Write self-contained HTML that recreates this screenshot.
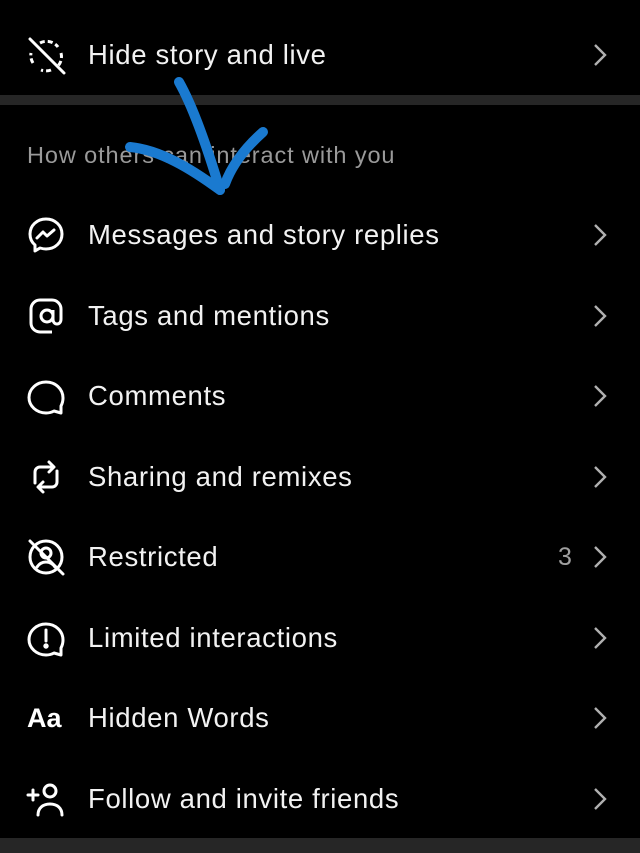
<!DOCTYPE html>
<html><head><meta charset="utf-8"><style>
html,body{margin:0;padding:0;background:#000;width:640px;height:853px;overflow:hidden;position:relative;font-family:"Liberation Sans",Roboto,sans-serif}
.row{position:absolute;left:0;width:640px;height:40px}
.t{position:absolute;left:88px;top:0;line-height:40px;font-size:27.5px;letter-spacing:0.65px;color:#f2f2f2;white-space:nowrap}
.ic{position:absolute;left:26px;top:0;width:40px;height:40px}
.div{position:absolute;left:0;width:640px;background:#262626}
</style></head><body>
<div class="div" style="top:95px;height:10px"></div>
<div class="div" style="top:838px;height:15px"></div>
<div style="position:absolute;left:27px;top:141px;font-size:23.5px;letter-spacing:0.9px;line-height:28px;color:#9a9a9a;white-space:nowrap">How others can interact with you</div>

<div class="row" style="top:35px">
<svg class="ic" viewBox="0 0 40 40" fill="none" stroke="#fff" stroke-width="3"><path d="M14 8a14 14 0 0 1 18 4M35 18a14 14 0 0 1-4 14M25 35a14 14 0 0 1-10 0M7 28a14 14 0 0 1-2-10" stroke-dasharray="5 3"/><path d="M4 4l34 34" stroke-linecap="round"/></svg>
<div class="t">Hide story and live</div></div>

<div class="row" style="top:215px">
<svg class="ic" viewBox="0 0 40 40" fill="none" stroke="#fff" stroke-width="3" stroke-linejoin="round"><path d="M20 4C11 4 4 10.5 4 19c0 4.5 2 8.5 5 11v6l5-3c2 .6 4 1 6 1 9 0 16-6.5 16-15S29 4 20 4z"/><path d="M11 23l6-6 4 4 7-6" stroke-linecap="round"/></svg>
<div class="t">Messages and story replies</div></div>

<div class="row" style="top:296px">
<svg class="ic" viewBox="0 0 40 40" fill="none" stroke="#fff" stroke-width="3"><path d="M26 36H14a9 9 0 0 1-9-9V13a9 9 0 0 1 9-9h12a9 9 0 0 1 9 9v10c0 3-1.5 5-4 5s-4-2-4-5v-9"/><circle cx="21" cy="20" r="6"/></svg>
<div class="t">Tags and mentions</div></div>

<div class="row" style="top:376px">
<svg class="ic" viewBox="0 0 40 40" fill="none" stroke="#fff" stroke-width="3" stroke-linejoin="round"><path d="M35 30c1.3-2.5 2-5 2-8 0-9-7.6-16-17-16S3 13 3 21.5 10.6 37 20 37c3 0 5.7-.7 8-2l7 2z"/></svg>
<div class="t">Comments</div></div>

<div class="row" style="top:457px">
<svg class="ic" viewBox="0 0 40 40" fill="none" stroke="#fff" stroke-width="3" stroke-linecap="round" stroke-linejoin="round"><path d="M9 26V15a5 5 0 0 1 5-5h13M23 5l5 5-5 5M31 14v11a5 5 0 0 1-5 5H13M17 25l-5 5 5 5"/></svg>
<div class="t">Sharing and remixes</div></div>

<div class="row" style="top:537px">
<svg class="ic" viewBox="0 0 40 40" fill="none" stroke="#fff" stroke-width="3" stroke-linecap="round"><circle cx="20" cy="20" r="16"/><circle cx="20" cy="16" r="5"/><path d="M11 30c2-3 5-5 9-5s7 2 9 5"/><path d="M4 4l33 33"/></svg>
<div class="t">Restricted</div>
<div style="position:absolute;left:558px;top:0;line-height:40px;font-size:25px;color:#a0a0a0">3</div></div>

<div class="row" style="top:618px">
<svg class="ic" viewBox="0 0 40 40" fill="none" stroke="#fff" stroke-width="3" stroke-linejoin="round"><path d="M35 30c1.3-2.5 2-5 2-8 0-9-7.6-16-17-16S3 13 3 21.5 10.6 37 20 37c3 0 5.7-.7 8-2l7 2z"/><path d="M20 12v11" stroke-linecap="round"/><circle cx="20" cy="28" r="1.2" fill="#fff"/></svg>
<div class="t">Limited interactions</div></div>

<div class="row" style="top:698px">
<div style="position:absolute;left:27px;top:0;line-height:40px;font-size:27px;font-weight:bold;color:#fff">Aa</div>
<div class="t">Hidden Words</div></div>

<div class="row" style="top:779px">
<svg class="ic" viewBox="0 0 40 40" fill="none" stroke="#fff" stroke-width="3" stroke-linecap="round"><path d="M2 16h10M7 11v10"/><circle cx="24" cy="12" r="6"/><path d="M12 36c0-7 5-11 12-11s12 4 12 11"/></svg>
<div class="t">Follow and invite friends</div></div>

<svg width="0" height="0" style="position:absolute"><defs><symbol id="c" viewBox="0 0 16 24"><path d="M3 2l10 10L3 22" fill="none" stroke="#b0b0b0" stroke-width="2.4"/></symbol></defs></svg>
<svg style="position:absolute;left:592px;top:43px" width="16" height="24"><use href="#c"/></svg>
<svg style="position:absolute;left:592px;top:223px" width="16" height="24"><use href="#c"/></svg>
<svg style="position:absolute;left:592px;top:304px" width="16" height="24"><use href="#c"/></svg>
<svg style="position:absolute;left:592px;top:384px" width="16" height="24"><use href="#c"/></svg>
<svg style="position:absolute;left:592px;top:465px" width="16" height="24"><use href="#c"/></svg>
<svg style="position:absolute;left:592px;top:545px" width="16" height="24"><use href="#c"/></svg>
<svg style="position:absolute;left:592px;top:626px" width="16" height="24"><use href="#c"/></svg>
<svg style="position:absolute;left:592px;top:706px" width="16" height="24"><use href="#c"/></svg>
<svg style="position:absolute;left:592px;top:787px" width="16" height="24"><use href="#c"/></svg>

<svg style="position:absolute;left:0;top:0" width="640" height="853" fill="none" stroke="#1a7ad0" stroke-width="10" stroke-linecap="round" stroke-linejoin="round">
<path d="M179 82C192 105 205 140 220 190"/>
<path d="M130 147C160 150 190 168 220 190"/>
<path d="M263 132C245 148 232 165 225 184"/>
</svg>
</body></html>
